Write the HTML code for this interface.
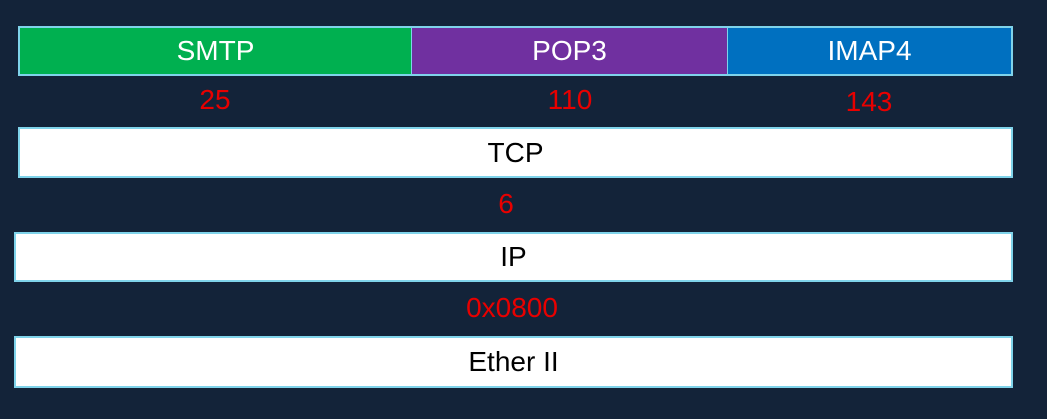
<!DOCTYPE html>
<html><head><style>
body{margin:0;width:1047px;height:419px;background:#132339;position:relative;overflow:hidden;font-family:"Liberation Sans",Arial,sans-serif}
.b{position:absolute;box-sizing:border-box;border:2px solid #7fd3ea;display:flex;align-items:center;justify-content:center;font-size:28px}
.n{position:absolute;color:#e80000;font-size:28px;transform:translate(-50%,-50%);white-space:nowrap}
</style></head><body>
<div class="b" style="left:18px;top:26px;width:394px;height:50px;background:#00b050;color:#fff;border-right-width:1px">SMTP</div>
<div class="b" style="left:411px;top:26px;width:317px;height:50px;background:#7030a0;color:#fff;border-left-width:1px;border-right-width:1px">POP3</div>
<div class="b" style="left:727px;top:26px;width:286px;height:50px;background:#0070c0;color:#fff;border-left-width:1px">IMAP4</div>
<div class="n" style="left:215px;top:100px">25</div>
<div class="n" style="left:570px;top:100px">110</div>
<div class="n" style="left:869px;top:102px">143</div>
<div class="b" style="left:18px;top:127px;width:995px;height:51px;background:#fff;color:#000">TCP</div>
<div class="n" style="left:506px;top:204px">6</div>
<div class="b" style="left:14px;top:232px;width:999px;height:50px;background:#fff;color:#000">IP</div>
<div class="n" style="left:512px;top:308px">0x0800</div>
<div class="b" style="left:14px;top:336px;width:999px;height:52px;background:#fff;color:#000">Ether II</div>
</body></html>
